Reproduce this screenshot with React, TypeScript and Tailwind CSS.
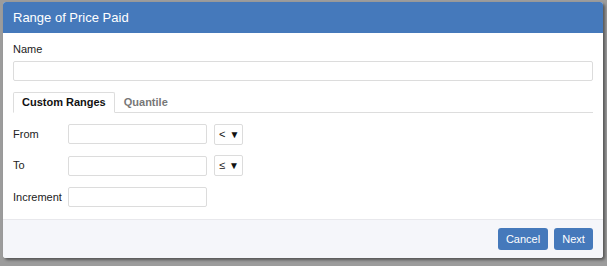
export default function App() {
  return (
    <div
      className="h-[266px] w-[607px] bg-[#9c9c9c] pl-[3px] pt-[2px] overflow-hidden"
      style={{ fontFamily: '"Liberation Sans", Arial, sans-serif' }}
    >
      <div className="flex h-[256px] w-[600px] flex-col overflow-hidden rounded-[3px] bg-white shadow-[2px_2px_3px_rgba(0,0,0,0.45)]">
        <div className="flex h-[31px] items-center bg-[#4579bb] px-[10px] text-[13px] text-white">
          Range of Price Paid
        </div>

        <div className="flex flex-1 flex-col px-[10px] pt-[9px] text-[11px] text-[#222]">
          <label className="leading-[14px]">Name</label>
          <input className="mt-[5px] h-[20px] w-full rounded-[2px] border border-[#dcdcdc] outline-none" />

          <div className="mt-[11px] flex h-[21px] border-b border-[#ddd]">
            <div className="-mb-px flex shrink-0 items-center whitespace-nowrap rounded-t-[2px] border border-[#ddd] border-b-white bg-white px-[8px] font-bold text-[#111]">
              Custom Ranges
            </div>
            <div className="flex items-center whitespace-nowrap px-[9px] font-bold text-[#777]">Quantile</div>
          </div>

          <div className="mt-[11px] flex flex-col gap-[11.5px]">
            <Row label="From" op="<" />
            <Row label="To" op="≤" />
            <Row label="Increment" />
          </div>
        </div>

        <div className="flex h-[39px] items-center justify-end gap-[6px] border-t border-[#e8e8ec] bg-[#f5f6fa] px-[10px]">
          <button className="h-[22px] w-[50px] rounded-[3px] bg-[#4579bb] text-[11px] text-white">Cancel</button>
          <button className="h-[22px] w-[39px] rounded-[3px] bg-[#4579bb] text-[11px] text-white">Next</button>
        </div>
      </div>
    </div>
  );
}

function Row({ label, op }: { label: string; op?: string }) {
  return (
    <div className="flex h-[20px] items-center">
      <span className="w-[55px] whitespace-nowrap">{label}</span>
      <input className="h-[20px] w-[139px] rounded-[2px] border border-[#dcdcdc] outline-none" />
      {op && (
        <div className="ml-[7px] flex h-[21px] w-[29px] items-center gap-[4px] rounded-[2px] border border-[#dcdcdc] px-[4px] text-[11px] text-[#111]">
          <span>{op}</span>
          <span className="text-[10px]">▼</span>
        </div>
      )}
    </div>
  );
}
